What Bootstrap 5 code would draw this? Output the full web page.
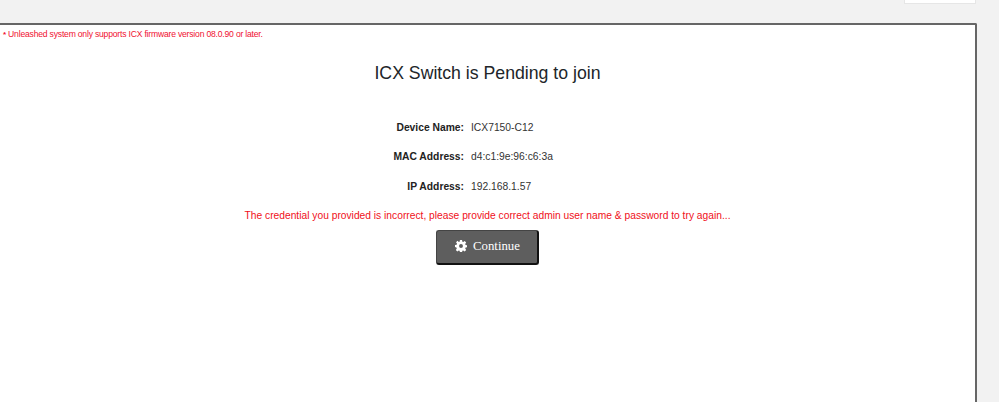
<!DOCTYPE html>
<html lang="en">
<head>
<meta charset="utf-8">
<title>ICX Switch</title>
<link href="https://cdn.jsdelivr.net/npm/bootstrap@5.3.0/dist/css/bootstrap.min.css" rel="stylesheet">
<style>
html, body { height: 402px; overflow: hidden; }
body { background: #f2f2f2; font-family: "Liberation Sans", Arial, sans-serif; }
.top-strip { height: 23px; padding-right: 23px; }
.tab-box { width: 72px; height: 4px; background: #fff; border: 1px solid #e6e6e6; border-top: 0; }
.main-panel { height: 379px; margin-right: 22px; background: #fff; border-top: 2px solid #666; border-right: 2px solid #666; border-radius: 0 2px 0 0; }
.fw-note { color: #f01030; font-size: 8.6px; letter-spacing: -.2px; line-height: 10px; padding: 4px 0 0 3px; }
.fw-mark { font-size: 8px; font-weight: 700; }
.pend-title { color: #212529; font-size: 17.7px; line-height: 22px; margin: 22px 0 0; font-weight: 400; }
.info-rows { margin-top: 37px; }
.info-line { height: 29.3px; font-size: 10.3px; line-height: 14px; color: #333; }
.info-key { width: 464px; text-align: right; font-weight: 700; color: #222; }
.info-val { margin-left: 7px; }
.err-line { color: #f01020; font-size: 10.25px; line-height: 14px; }
.go-btn { background: #5e5e5e; color: #fff; font-family: "Liberation Serif", serif; font-size: 12.8px; width: 103px; height: 35px; margin-top: 7px; padding: 0 0 0 1px; border: 1px solid #444; border-right: 2px solid #111; border-bottom: 2px solid #111; border-radius: 3px; }
.go-btn:hover { background: #5e5e5e; color: #fff; }
.go-btn svg { width: 12px; height: 12px; margin-right: 6px; vertical-align: -2px; }
</style>
</head>
<body>
<div class="top-strip d-flex justify-content-end"><div class="tab-box"></div></div>
<div class="main-panel">
  <div class="fw-note"><span class="fw-mark">*</span> Unleashed system only supports ICX firmware version 08.0.90 or later.</div>
  <h1 class="pend-title text-center">ICX Switch is Pending to join</h1>
  <div class="info-rows">
    <div class="info-line d-flex"><div class="info-key">Device Name:</div><div class="info-val">ICX7150-C12</div></div>
    <div class="info-line d-flex"><div class="info-key">MAC Address:</div><div class="info-val">d4:c1:9e:96:c6:3a</div></div>
    <div class="info-line d-flex"><div class="info-key">IP Address:</div><div class="info-val">192.168.1.57</div></div>
  </div>
  <div class="err-line text-center">The credential you provided is incorrect, please provide correct admin user name &amp; password to try again...</div>
  <div class="text-center">
    <button type="button" class="btn go-btn">
      <svg viewBox="0 0 16 16" fill="#fff" aria-hidden="true"><path fill-rule="evenodd" d="M6.6 0h2.8l.4 2.2 1.2.5L12.9 1.4l2 2-1.3 1.9.5 1.2 2.1.4v2.8l-2.1.4-.5 1.2 1.3 1.9-2 2-1.9-1.3-1.2.5-.4 2.1H6.6l-.4-2.1-1.2-.5-1.9 1.3-2-2 1.3-1.9-.5-1.2L0 9.4V6.6l2.2-.4.5-1.2L1.4 3.1l2-2L5 2.7l1.2-.5zM8 5.4a2.6 2.6 0 1 0 0 5.2 2.6 2.6 0 0 0 0-5.2z"/></svg>Continue
    </button>
  </div>
</div>
</body>
</html>
